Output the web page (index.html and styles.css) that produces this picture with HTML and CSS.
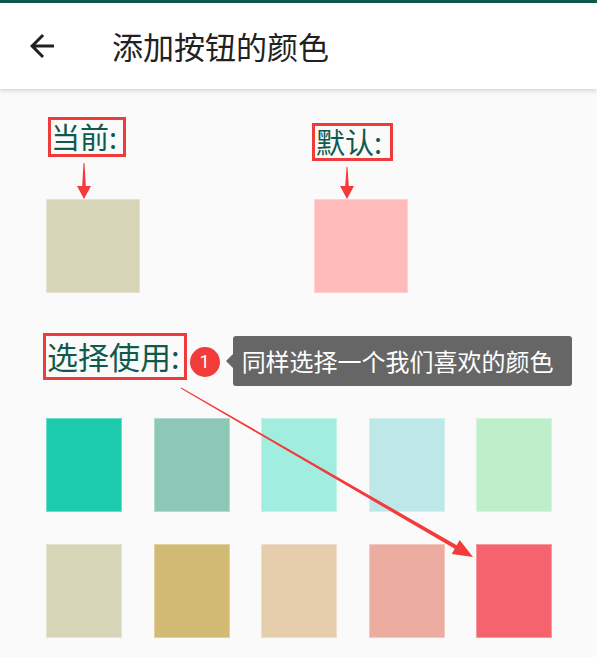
FILE: index.html
```html
<!DOCTYPE html>
<html lang="zh-CN">
<head>
  <meta charset="UTF-8">
  <meta name="viewport" content="width=device-width, initial-scale=1.0">
  <title>添加按钮的颜色</title>
  <link rel="stylesheet" href="styles.css">
</head>
<body>

  <!-- Status strip + app bar -->
  <div class="status-strip"></div>
  <header class="app-bar">
    <svg class="back-icon" viewBox="0 0 24 24" width="36" height="36">
      <path d="M20 11H7.83l5.59-5.59L12 4l-8 8 8 8 1.41-1.41L7.83 13H20v-2z" fill="#212121"/>
    </svg>
    <h1 class="app-title">添加按钮的颜色</h1>
  </header>

  <main class="content">
    <!-- Current / default colours -->
    <section class="preview-row">
      <div class="preview-col col-current">
        <span class="label-box">当前:</span>
        <svg class="down-arrow" viewBox="0 0 20 42" width="20" height="42">
          <polygon points="9.5,6 10.5,6 11.8,29 17,29 10,42 3,29 8.2,29" fill="#f43a3a"/>
        </svg>
        <div class="swatch swatch-big" style="background:#d7d5b8"></div>
      </div>
      <div class="preview-col col-default">
        <span class="label-box">默认:</span>
        <svg class="down-arrow" viewBox="0 0 20 38" width="20" height="38">
          <polygon points="9.5,6 10.5,6 11.8,25 17,25 10,38 3,25 8.2,25" fill="#f43a3a"/>
        </svg>
        <div class="swatch swatch-big" style="background:#ffbaba"></div>
      </div>
    </section>

    <!-- Choose label with hint -->
    <section class="choose-row">
      <span class="label-box choose-label">选择使用:</span>
      <span class="step-badge">1</span>
      <div class="hint-tip">同样选择一个我们喜欢的颜色</div>
    </section>

    <!-- Palette -->
    <section class="palette">
      <div class="swatch" style="background:#1ccbae"></div>
      <div class="swatch" style="background:#8dc7b5"></div>
      <div class="swatch" style="background:#a1ede0"></div>
      <div class="swatch" style="background:#bee7e8"></div>
      <div class="swatch" style="background:#bfeeca"></div>
      <div class="swatch" style="background:#d7d5b8"></div>
      <div class="swatch" style="background:#d2b974"></div>
      <div class="swatch" style="background:#e6cdac"></div>
      <div class="swatch" style="background:#ecada0"></div>
      <div class="swatch" style="background:#f4636e"></div>
    </section>
  </main>

  <!-- Annotation arrow drawn over the page -->
  <svg class="annotation" viewBox="0 0 597 657" width="597" height="657">
    <polygon points="181.25,387.57 456.7,545.3 459.7,540.1 473,557 451.7,553.9 454.7,548.7 180.75,388.43" fill="#f43a3a"/>
  </svg>
</body>
</html>
```

FILE: styles.css
```css
/* Base */
* {
  margin: 0;
  padding: 0;
  box-sizing: border-box;
}

body {
  font-family: "Noto Sans CJK SC", "Noto Sans", sans-serif;
  background-color: #fafafa;
  width: 597px;
  height: 657px;
  overflow: hidden;
  position: relative;
}

/* Top bar */
.status-strip {
  height: 3px;
  background-color: #10594b;
}

.app-bar {
  height: 86px;
  background-color: #ffffff;
  display: flex;
  align-items: center;
  box-shadow: 0 2px 4px rgba(0, 0, 0, 0.14);
  position: relative;
  z-index: 2;
}

.back-icon {
  margin-left: 24px;
  display: block;
}

.app-title {
  margin-left: 52px;
  font-size: 31px;
  font-weight: 400;
  color: #212121;
  line-height: 40px;
}

/* Content */
.content {
  padding: 28px 0 0 46px;
}

.label-box {
  display: inline-block;
  border: 3px solid #ee3b3b;
  color: #0f5a4c;
  font-size: 29px;
  line-height: 32px;
  white-space: nowrap;
}

.preview-row {
  display: flex;
}

.preview-col {
  display: flex;
  flex-direction: column;
  align-items: flex-start;
}

.col-current {
  width: 268px;
}

.col-current .label-box {
  margin-left: 2px;
  height: 40px;
  padding: 0 6px 0 0;
}

.col-current .down-arrow {
  margin-left: 28px;
}

.col-default {
  padding-top: 6px;
}

.col-default .label-box {
  margin-left: -2px;
  height: 38px;
  padding: 0 8px 0 1px;
  line-height: 30px;
}

.col-default .down-arrow {
  margin-left: 23px;
}

.down-arrow {
  display: block;
}

.swatch {
  height: 94px;
  box-shadow: inset 0 0 0 1px rgba(255, 255, 255, 0.35);
}

.swatch-big {
  width: 94px;
}

/* Choose row */
.choose-row {
  display: flex;
  align-items: flex-start;
  margin-top: 40px;
}

.choose-label {
  margin-left: -3px;
  height: 47px;
  font-size: 31px;
  line-height: 40px;
  padding: 0 4px 0 1px;
}

.step-badge {
  margin: 14px 0 0 3px;
  width: 30px;
  height: 30px;
  border-radius: 50%;
  background-color: #f23c3c;
  color: #ffffff;
  font-family: "Roboto", sans-serif;
  font-size: 18px;
  line-height: 30px;
  text-align: center;
}

.hint-tip {
  position: relative;
  margin: 3px 0 0 13px;
  width: 339px;
  height: 50px;
  background-color: #666666;
  border-radius: 3px;
  color: #ffffff;
  font-size: 24px;
  line-height: 50px;
  padding-left: 9px;
  white-space: nowrap;
}

.hint-tip::before {
  content: "";
  position: absolute;
  left: -7px;
  top: 18px;
  border-top: 7px solid transparent;
  border-bottom: 7px solid transparent;
  border-right: 7px solid #666666;
}

/* Palette grid */
.palette {
  margin-top: 32px;
  display: grid;
  grid-template-columns: repeat(5, 76px);
  column-gap: 31.5px;
  row-gap: 32px;
}

/* Annotation overlay */
.annotation {
  position: absolute;
  top: 0;
  left: 0;
  pointer-events: none;
  z-index: 3;
}
```
